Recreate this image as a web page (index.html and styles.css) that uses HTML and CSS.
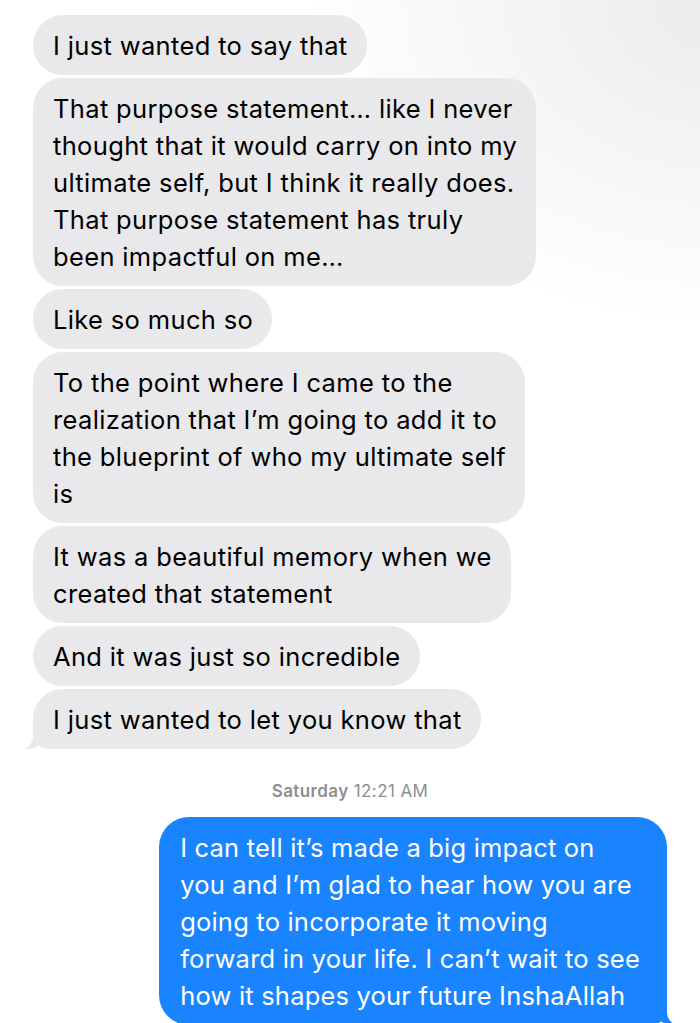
FILE: index.html
```html
<!DOCTYPE html>
<html lang="en">
<head>
<meta charset="utf-8">
<title>Messages</title>
<link rel="stylesheet" href="styles.css">
</head>
<body>
<main class="thread">
  <div class="bubble in">I just wanted to say that</div>
  <div class="bubble in">That purpose statement… like I never<br>thought that it would carry on into my<br>ultimate self, but I think it really does.<br>That purpose statement has truly<br>been impactful on me…</div>
  <div class="bubble in">Like so much so</div>
  <div class="bubble in">To the point where I came to the<br>realization that I’m going to add it to<br>the blueprint of who my ultimate self<br>is</div>
  <div class="bubble in">It was a beautiful memory when we<br>created that statement</div>
  <div class="bubble in">And it was just so incredible</div>
  <div class="bubble in tail-in">I just wanted to let you know that<svg class="tail tail-left" width="26" height="26" viewBox="0 0 26 26" aria-hidden="true"><path d="M9 0 L9 12 C9 19 6 23.5 0 26 C6 26.3 11 25 15 22.5 C18 24.8 21.5 26 26 26 L26 0 Z" fill="#e9e9eb"/></svg></div>
  <div class="stamp"><b>Saturday</b> 12:21 AM</div>
  <div class="bubble out">I can tell it’s made a big impact on<br>you and I’m glad to hear how you are<br>going to incorporate it moving<br>forward in your life. I can’t wait to see<br>how it shapes your future InshaAllah<svg class="tail tail-right" width="26" height="26" viewBox="0 0 26 26" aria-hidden="true"><path d="M17 0 L17 12 C17 19 20 23.5 26 26 C20 26.3 15 25 11 22.5 C8 24.8 4.5 26 0 26 L0 0 Z" fill="#1a84fe"/></svg></div>
</main>
</body>
</html>
```

FILE: styles.css
```css
html, body {
  margin: 0;
  padding: 0;
  height: 100%;
  overflow: hidden;
}

body {
  background:
    radial-gradient(ellipse 420px 330px at 720px 0px, rgba(0, 0, 0, 0.08), rgba(0, 0, 0, 0) 100%),
    #ffffff;
  font-family: "Inter", "Liberation Sans", sans-serif;
  color: #000;
}

.thread {
  display: flex;
  flex-direction: column;
  align-items: flex-start;
  gap: 3px;
  padding: 15px 33px 0 33px;
}

.bubble {
  position: relative;
  font-size: 25.5px;
  letter-spacing: 0.35px;
  line-height: 37px;
  padding: 11.5px 19px 11.5px 20px;
  border-radius: 30px;
  white-space: nowrap;
}

.bubble.in {
  background: #e9e9eb;
  color: #000;
}

.bubble.tail-in {
  border-bottom-left-radius: 20px;
}

.tail {
  position: absolute;
  bottom: 0;
}

.tail-left {
  left: -9px;
}

.tail-right {
  right: -9px;
}

.stamp {
  align-self: center;
  margin-top: 29px;
  margin-bottom: 13px;
  font-size: 17px;
  line-height: 20px;
  color: #8e8e93;
  letter-spacing: 0.4px;
}

.stamp b {
  font-weight: 600;
}

.bubble.out {
  align-self: flex-end;
  background: #1a84fe;
  color: #fff;
  letter-spacing: 0.2px;
  padding: 11.5px 27px 11.5px 21px;
  border-bottom-right-radius: 20px;
}
```
